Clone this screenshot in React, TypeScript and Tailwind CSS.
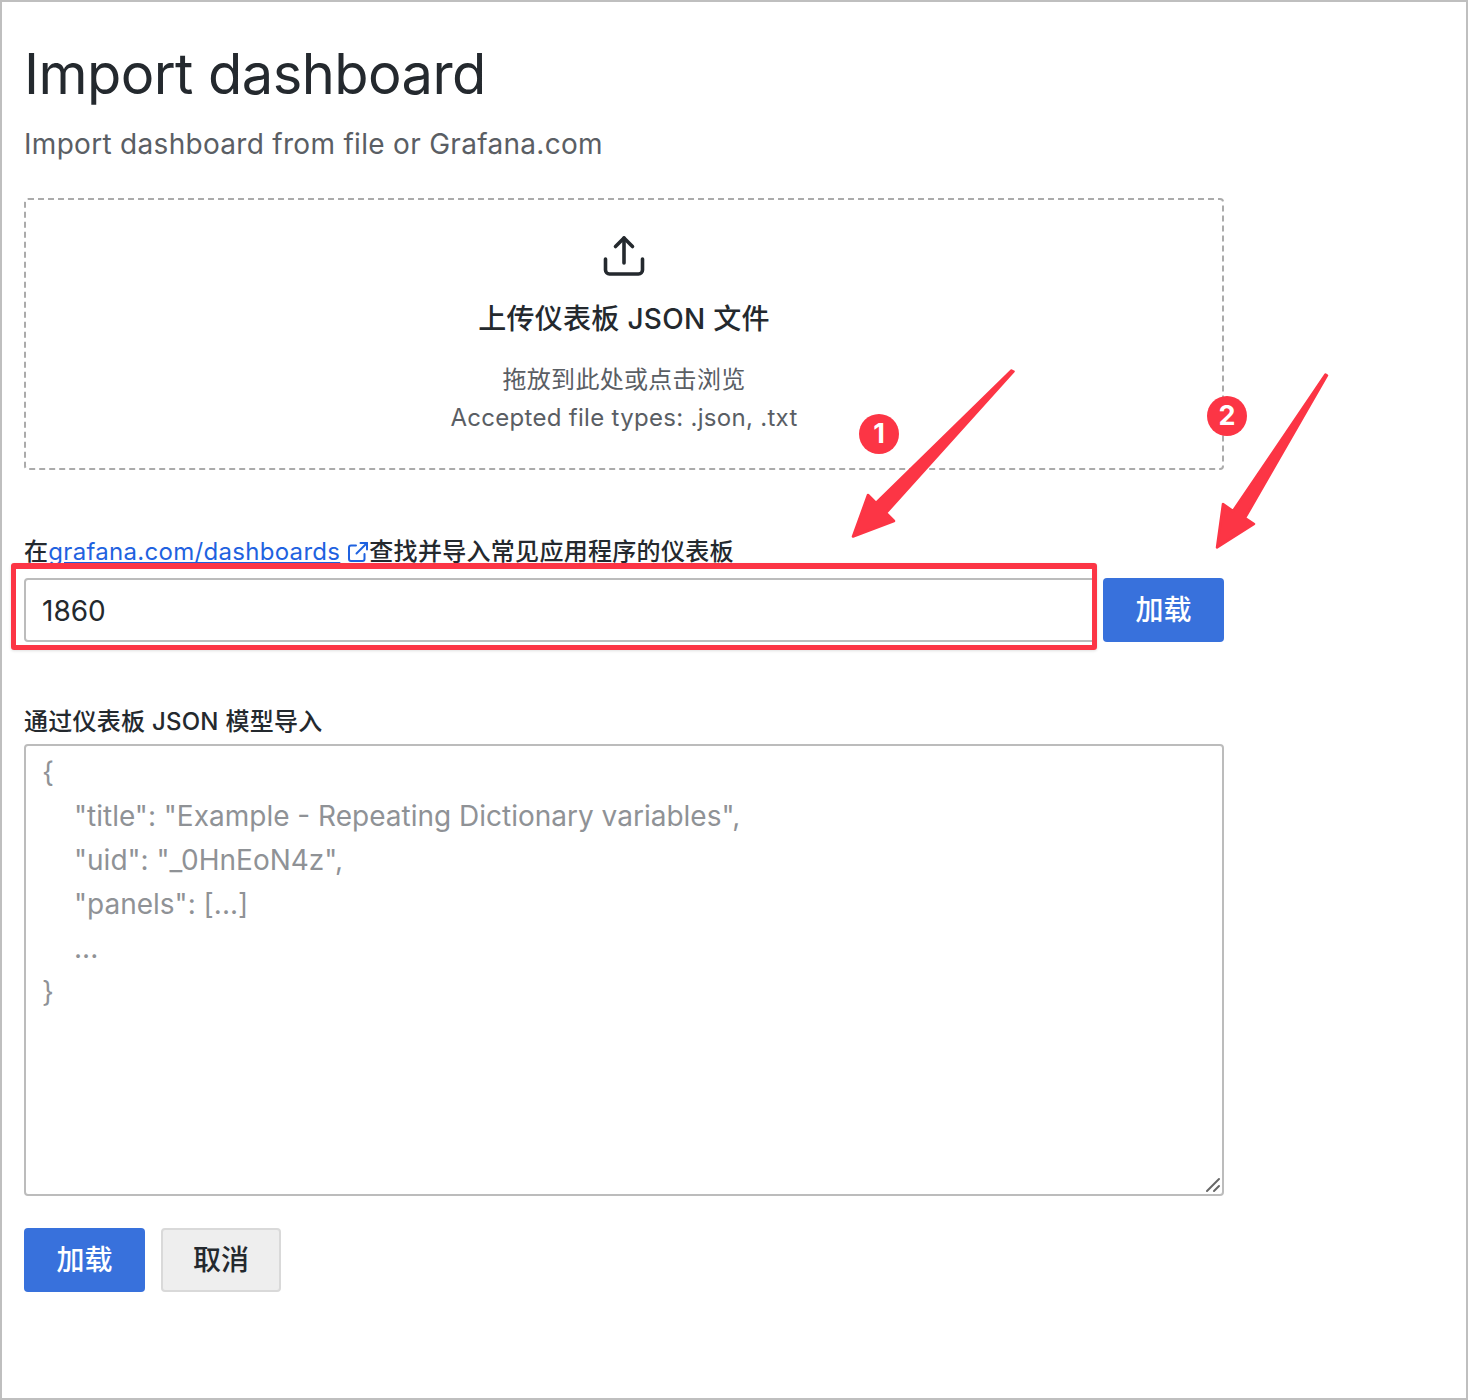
import React from "react";

const cjk = "font-['Inter','Noto_Sans_CJK_SC',sans-serif]";

function Arrow({ points }: { points: string }) {
  return (
    <polygon points={points} fill="#fc3545" stroke="#fc3545" strokeWidth="2.5" strokeLinejoin="round" />
  );
}

export default function App() {
  return (
    <div className={`relative w-[1468px] h-[1400px] bg-white border-2 border-[#bfbfbf] pl-[22px] pt-[40px] text-[#24292e] overflow-hidden ${cjk}`}>
      <div className="w-[1200px]">
        <h1 className="text-[56px] leading-[64px] font-normal tracking-[-0.56px]">Import dashboard</h1>
        <p className="mt-[20px] text-[28px] leading-[36px] tracking-[0.3px] text-[#5a5e64]">Import dashboard from file or Grafana.com</p>

        <div className="mt-[36px] h-[272px] border-2 border-dashed border-[#ababab] rounded-[4px] flex flex-col items-center pt-[34px]">
          <svg width="44" height="44" viewBox="0 0 44 44" fill="none" stroke="#24292e" strokeWidth="3.6" strokeLinecap="round" strokeLinejoin="round">
            <path d="M22 4v25" />
            <path d="M13.5 12.5 22 4l8.5 8.5" />
            <path d="M3.5 25v11a4 4 0 0 0 4 4h29a4 4 0 0 0 4-4V25" />
          </svg>
          <div className="mt-[23px] text-[28px] leading-[36px] tracking-[0.3px] font-medium">上传仪表板 JSON 文件</div>
          <div className="mt-[24px] text-[24px] leading-[38px] tracking-[0.3px] text-[#5a5e64] text-center">
            <div>拖放到此处或点击浏览</div>
            <div>Accepted file types: .json, .txt</div>
          </div>
        </div>

        <div className="mt-[63px] h-[38px] flex items-center text-[24px] font-medium leading-[38px] tracking-[0.3px] whitespace-nowrap">
          <span>在</span>
          <a className="text-[#1f62e0] underline font-normal">grafana.com/dashboards</a>
          <svg className="ml-[7px]" width="22" height="22" viewBox="0 0 22 22" fill="none" stroke="#1f62e0" strokeWidth="2" strokeLinecap="round" strokeLinejoin="round">
            <path d="M9 4.5H4a2 2 0 0 0-2 2V18a2 2 0 0 0 2 2h11.5a2 2 0 0 0 2-2v-5" />
            <path d="M13.5 2H20v6.5" />
            <path d="M20 2 9.5 12.5" />
          </svg>
          <span>查找并导入常见应用程序的仪表板</span>
        </div>

        <div className="mt-[7px] flex h-[64px]">
          <div className="w-[1072px] h-[64px] border-2 border-[#bcbcbc] rounded-[4px] flex items-center pl-[16px] pt-[2px] text-[28px]">1860</div>
          <button className="ml-[7px] w-[121px] h-[64px] bg-[#3871dc] rounded-[4px] text-white text-[28px] font-medium">加载</button>
        </div>

        <div className="mt-[61px] text-[24px] leading-[38px] tracking-[0.25px] font-medium">通过仪表板 JSON 模型导入</div>
        <div className="relative mt-[3px] h-[452px] w-[1200px] border-2 border-[#bcbcbc] rounded-[4px] pl-[16px] pt-[4px] text-[28px] leading-[44px] text-[#8f9296] whitespace-pre">
          <div>{"{"}</div>
          <div className="pl-[32px]">{'"title": "Example - Repeating Dictionary variables",'}</div>
          <div className="pl-[32px]">{'"uid": "_0HnEoN4z",'}</div>
          <div className="pl-[32px]">{'"panels": [...]'}</div>
          <div className="pl-[32px]">...</div>
          <div>{"}"}</div>
          <svg className="absolute right-0 bottom-0" width="18" height="18" viewBox="0 0 18 18" stroke="#666" strokeWidth="2" strokeLinecap="round">
            <path d="M3 15 15 3" />
            <path d="M10 15l5-5" />
          </svg>
        </div>

        <div className="mt-[32px] flex gap-[16px]">
          <button className="w-[121px] h-[64px] bg-[#3871dc] rounded-[4px] text-white text-[28px] font-medium">加载</button>
          <button className="w-[120px] h-[64px] bg-[#eeeeee] border-2 border-[#d9d9d9] rounded-[4px] text-[#24292e] text-[28px] font-medium">取消</button>
        </div>
      </div>

      {/* annotation layer */}
      <div className="absolute left-[9px] top-[561px] w-[1086px] h-[87px] border-[5px] border-t-[6px] border-[#fc3545] rounded-[3px] shadow-[0_1px_3px_rgba(0,0,0,0.12)]" />
      <svg className="absolute left-[-2px] top-[-2px] pointer-events-none" width="1468" height="1400">
        <Arrow points="1011.5,370.5 876,503 868,495 853,536.5 894,521 886,513 1013.5,371.5" />
        <Arrow points="1325.5,374.5 1233,511 1223,504 1217,547.5 1254,524 1245,518 1327,375.5" />
      </svg>
      <div className="absolute left-[857px] top-[412px] w-[40px] h-[40px] rounded-full bg-[#fc3545] text-white flex items-center justify-center text-[27px] font-bold">1</div>
      <div className="absolute left-[1205px] top-[394px] w-[40px] h-[40px] rounded-full bg-[#fc3545] text-white flex items-center justify-center text-[27px] font-bold">2</div>
    </div>
  );
}
